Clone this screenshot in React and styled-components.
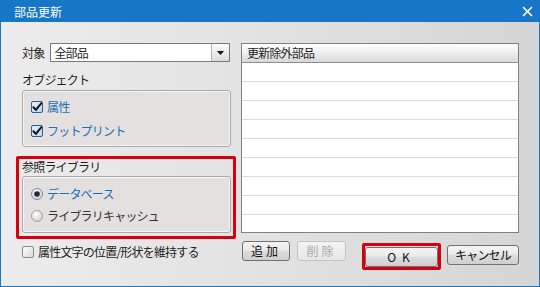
import React from "react";
import styled, { createGlobalStyle } from "styled-components";

const Global = createGlobalStyle`
  html, body { margin: 0; padding: 0; background: #fff; }
  body {
    font-family: "Noto Sans CJK JP", "Noto Sans", sans-serif;
    font-size: 12px;
    color: #1e1e1e;
  }
`;

const Window = styled.div`
  width: 540px;
  height: 287px;
  box-sizing: border-box;
  border: 1px solid #1777c6;
  border-top: none;
  display: flex;
  flex-direction: column;
  overflow: hidden;
`;

const TitleBar = styled.div`
  height: 22px;
  flex-shrink: 0;
  background: #1777c6;
  color: #fff;
  display: flex;
  align-items: center;
  justify-content: space-between;
  padding: 0 6px 0 13px;
  font-size: 12px;
`;

const Body = styled.div`
  flex: 1;
  background: linear-gradient(90deg, #ececec 0%, #e2e2e2 50%, #d5d5d5 100%);
  display: flex;
  gap: 5px;
  padding: 21px 0 0 15px;
  letter-spacing: -0.8px;
`;

const LeftColumn = styled.div`
  width: 220px;
  display: flex;
  flex-direction: column;
`;

const ComboRow = styled.div`
  display: flex;
  align-items: center;
  height: 19px;
  padding-left: 6px;
  gap: 6px;
`;

const Combo = styled.div`
  width: 180px;
  height: 19px;
  box-sizing: border-box;
  border: 1px solid #7a7a7a;
  background: #fff;
  display: flex;
  align-items: center;
  padding-left: 3px;
`;

const ComboText = styled.span`
  flex: 1;
`;

const ComboArrow = styled.div`
  width: 17px;
  height: 17px;
  border-left: 1px solid #b5b5b5;
  background: linear-gradient(#fbfbfb, #dcdcdc);
  display: flex;
  align-items: center;
  justify-content: center;
`;

const SectionLabel = styled.div`
  height: ${(p) => p.$h || 18}px;
  line-height: ${(p) => p.$h || 18}px;
  padding-left: ${(p) => p.$indent || 6}px;
  margin-top: ${(p) => p.$top || 0}px;
`;

const GroupBox = styled.div`
  margin: ${(p) => p.$margin};
  height: ${(p) => p.$height}px;
  box-sizing: border-box;
  border: 1px solid #a9a9a9;
  border-radius: 3px;
  background: #e3e0df;
  box-shadow: inset 0 0 0 1px #f6f6f6;
  display: flex;
  flex-direction: column;
  justify-content: center;
  gap: ${(p) => p.$gap}px;
  padding-left: 8px;
`;

const Highlight = styled.div`
  margin-top: 9px;
  height: 83px;
  box-sizing: border-box;
  border: 3px solid #d6000e;
  border-radius: 2px;
  display: flex;
  flex-direction: column;
`;

const OptionRow = styled.div`
  display: flex;
  align-items: center;
  gap: 4px;
  height: 17px;
  color: ${(p) => (p.$active ? "#1a6fb8" : "#333")};
`;

const BottomCheck = styled(OptionRow)`
  margin-top: 4px;
  padding-left: 6px;
  color: #222;
`;

const RightColumn = styled.div`
  width: 278px;
  display: flex;
  flex-direction: column;
`;

const List = styled.div`
  height: 190px;
  box-sizing: border-box;
  border: 1px solid #808080;
  background: #fff;
  overflow: hidden;
`;

const ListHeader = styled.div`
  height: 19px;
  box-sizing: border-box;
  border-bottom: 1px solid #8f8f8f;
  background: linear-gradient(#ffffff, #f0f0f0 45%, #d8d8d8);
  padding-left: 5px;
  line-height: 18px;
`;

const ListRow = styled.div`
  height: 19px;
  border-bottom: 1px solid #dcdcdc;
  box-sizing: border-box;
`;

const ButtonRow = styled.div`
  display: flex;
  align-items: flex-start;
  margin-top: 8px;
`;

const Button = styled.button`
  font-family: inherit;
  font-size: 12px;
  padding: 0;
  box-sizing: border-box;
  width: ${(p) => p.$w}px;
  height: 20px;
  margin-left: ${(p) => p.$left || 0}px;
  margin-top: ${(p) => p.$top || 0}px;
  border: 1px solid ${(p) => (p.disabled ? "#c4c4c4" : "#707070")};
  border-radius: 3px;
  background: ${(p) =>
    p.disabled
      ? "linear-gradient(#f4f4f4, #e6e6e6)"
      : "linear-gradient(#f4f4f4 0%, #ebebeb 45%, #dddddd 50%, #cfcfcf 100%)"};
  color: ${(p) => (p.disabled ? "#a8a8a8" : "#111")};
  letter-spacing: ${(p) => p.$spacing ?? -0.8}px;
  line-height: 18px;
`;

const OkFrame = styled.div`
  margin-left: 16px;
  margin-top: 2px;
  width: 79px;
  height: 27px;
  box-sizing: border-box;
  border: 3px solid #d6000e;
  border-radius: 2px;
  display: flex;
  align-items: center;
  justify-content: center;
`;

function CheckBox({ checked }) {
  return (
    <svg width="12" height="12" viewBox="0 0 12 12">
      <defs>
        <linearGradient id="cbg" x1="0" y1="0" x2="1" y2="1">
          <stop offset="0" stopColor="#e8f2fb" />
          <stop offset="1" stopColor="#b9d5ef" />
        </linearGradient>
        <linearGradient id="cbu" x1="0" y1="0" x2="1" y2="1">
          <stop offset="0" stopColor="#ffffff" />
          <stop offset="1" stopColor="#d8d8d8" />
        </linearGradient>
      </defs>
      <rect x="0.5" y="0.5" width="11" height="11" rx="1.5" fill={checked ? "url(#cbg)" : "url(#cbu)"} stroke={checked ? "#2d5f93" : "#8a8a8a"} />
      {checked && (
        <path d="M2.4 6.2 L4.9 8.9 L10.2 2.4" fill="none" stroke="#111" strokeWidth="2" strokeLinecap="round" strokeLinejoin="round" />
      )}
    </svg>
  );
}

function Radio({ checked }) {
  return (
    <svg width="12" height="12" viewBox="0 0 12 12">
      <defs>
        <radialGradient id="rbg" cx="0.4" cy="0.35" r="0.7">
          <stop offset="0" stopColor="#ffffff" />
          <stop offset="1" stopColor="#cfcfcf" />
        </radialGradient>
      </defs>
      <circle cx="6" cy="6" r="5.5" fill="url(#rbg)" stroke={checked ? "#6b8fb3" : "#a0a0a0"} />
      {checked && <circle cx="6" cy="6" r="2.8" fill="#2b2b2b" />}
    </svg>
  );
}

export default function App() {
  return (
    <>
      <Global />
      <Window>
        <TitleBar>
          <span>部品更新</span>
          <svg width="11" height="11" viewBox="0 0 11 11">
            <path d="M1 1 L10 10 M10 1 L1 10" stroke="#fff" strokeWidth="1.6" />
          </svg>
        </TitleBar>
        <Body>
          <LeftColumn>
            <ComboRow>
              <span>対象</span>
              <Combo>
                <ComboText>全部品</ComboText>
                <ComboArrow>
                  <svg width="7" height="4" viewBox="0 0 7 4">
                    <path d="M0 0 H7 L3.5 4 Z" fill="#111" />
                  </svg>
                </ComboArrow>
              </Combo>
            </ComboRow>
            <SectionLabel $top={9}>オブジェクト</SectionLabel>
            <GroupBox $margin="1px 5px 0 6px" $height={57} $gap={7}>
              <OptionRow $active>
                <CheckBox checked />
                <span>属性</span>
              </OptionRow>
              <OptionRow $active>
                <CheckBox checked />
                <span>フットプリント</span>
              </OptionRow>
            </GroupBox>
            <Highlight>
              <SectionLabel $indent={3} $h={16}>参照ライブラリ</SectionLabel>
              <GroupBox $margin="1px 2px 0 3px" $height={57} $gap={5}>
                <OptionRow $active>
                  <Radio checked />
                  <span>データベース</span>
                </OptionRow>
                <OptionRow>
                  <Radio />
                  <span>ライブラリキャッシュ</span>
                </OptionRow>
              </GroupBox>
            </Highlight>
            <BottomCheck>
              <CheckBox />
              <span>属性文字の位置/形状を維持する</span>
            </BottomCheck>
          </LeftColumn>
          <RightColumn>
            <List>
              <ListHeader>更新除外部品</ListHeader>
              {Array.from({ length: 9 }).map((_, i) => (
                <ListRow key={i} />
              ))}
            </List>
            <ButtonRow>
              <Button $w={48} $left={1} $spacing={3}>追加</Button>
              <Button $w={49} $left={7} $spacing={3} disabled>削除</Button>
              <OkFrame>
                <Button $w={73} $spacing={6}>OK</Button>
              </OkFrame>
              <Button $w={72} $left={6} $top={4}>キャンセル</Button>
            </ButtonRow>
          </RightColumn>
        </Body>
      </Window>
    </>
  );
}
